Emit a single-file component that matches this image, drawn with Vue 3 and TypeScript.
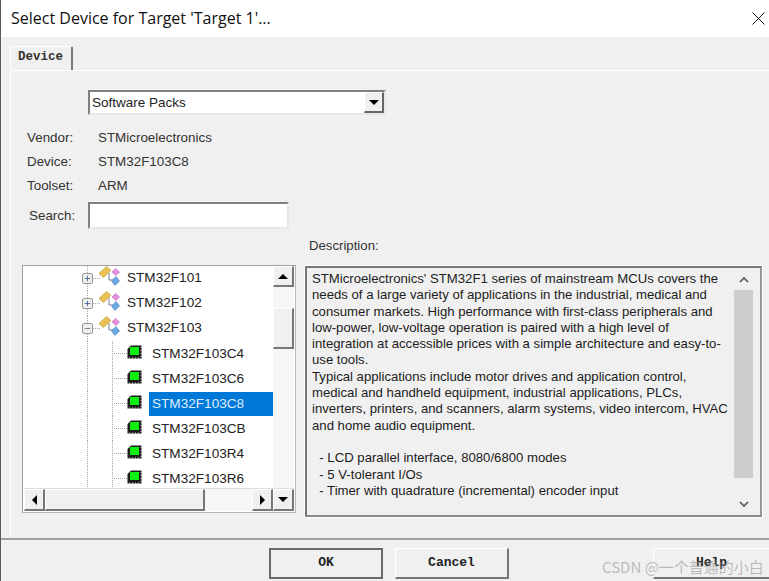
<script setup lang="ts">
interface TreeRow {
  label: string;
  kind: 'group' | 'chip';
  open?: boolean;
  selected?: boolean;
}

const rows: TreeRow[] = [
  { label: 'STM32F101', kind: 'group' },
  { label: 'STM32F102', kind: 'group' },
  { label: 'STM32F103', kind: 'group', open: true },
  { label: 'STM32F103C4', kind: 'chip' },
  { label: 'STM32F103C6', kind: 'chip' },
  { label: 'STM32F103C8', kind: 'chip', selected: true },
  { label: 'STM32F103CB', kind: 'chip' },
  { label: 'STM32F103R4', kind: 'chip' },
  { label: 'STM32F103R6', kind: 'chip' },
];

const infos = [
  { key: 'Vendor:', value: 'STMicroelectronics' },
  { key: 'Device:', value: 'STM32F103C8' },
  { key: 'Toolset:', value: 'ARM' },
];

const description: string[] = [
  "STMicroelectronics' STM32F1 series of mainstream MCUs covers the",
  'needs of a large variety of applications in the industrial, medical and',
  'consumer markets. High performance with first-class peripherals and',
  'low-power, low-voltage operation is paired with a high level of',
  'integration at accessible prices with a simple architecture and easy-to-',
  'use tools.',
  'Typical applications include motor drives and application control,',
  'medical and handheld equipment, industrial applications, PLCs,',
  'inverters, printers, and scanners, alarm systems, video intercom, HVAC',
  'and home audio equipment.',
  ' ',
  '  - LCD parallel interface, 8080/6800 modes',
  '  - 5 V-tolerant I/Os',
  '  - Timer with quadrature (incremental) encoder input',
];
</script>

<template>
  <div class="window">
    <header class="titlebar">
      <span class="title">Select Device for Target 'Target 1'...</span>
      <svg class="close" width="13" height="13" viewBox="0 0 13 13">
        <path d="M0.5 0.5 12.5 12.5 M12.5 0.5 0.5 12.5" stroke="#111" stroke-width="1" fill="none" />
      </svg>
    </header>

    <div class="tabs">
      <div class="tab">Device</div>
    </div>

    <main class="pane">
      <div class="combo">
        <span class="combo-text">Software Packs</span>
        <span class="combo-btn"><i class="tri down"></i></span>
      </div>

      <div class="infos">
        <div v-for="info in infos" :key="info.key" class="info">
          <span class="info-key">{{ info.key }}</span>
          <span class="info-val">{{ info.value }}</span>
        </div>
      </div>

      <div class="search">
        <span class="search-label">Search:</span>
        <div class="search-input"></div>
      </div>

      <div class="lower">
        <div class="tree">
          <div class="tree-main">
            <div class="tree-rows">
              <div v-for="row in rows" :key="row.label" class="row" :class="row.kind">
                <template v-if="row.kind === 'group'">
                  <span class="vline"></span>
                  <span class="hline-g"></span>
                  <span class="expander">
                    <svg width="9" height="9" viewBox="0 0 9 9">
                      <path v-if="row.open" d="M1 4.5H8" stroke="#5a6a8a" stroke-width="1" />
                      <path v-else d="M1 4.5H8M4.5 1V8" stroke="#34508a" stroke-width="1" />
                    </svg>
                  </span>
                  <svg class="group-icon" width="21" height="21" viewBox="0 0 21 21">
                    <path d="M10 7 V14 H14" stroke="#6f8199" stroke-width="1" fill="none" />
                    <path d="M0 7.5 7.5 0.5 12 4.5 4.5 11.5Z" fill="#eac254" stroke="#b08f2c" stroke-width="0.6" />
                    <path d="M13 6 16.5 2.5 20.5 6 17 9.5Z" fill="#e78fe0" stroke="#b567b0" stroke-width="0.6" />
                    <path d="M12.5 15 17 10.5 20.5 15 16 19.5Z" fill="#6aa8e6" stroke="#4a7fbc" stroke-width="0.6" />
                  </svg>
                  <span class="label">{{ row.label }}</span>
                </template>
                <template v-else>
                  <span class="vline"></span>
                  <span class="vline second"></span>
                  <span class="hline-c"></span>
                  <svg class="chip-icon" width="15" height="14" viewBox="0 0 15 14">
                    <path d="M4 0.5H14.5V13.5H0.5V4Z" fill="#1c1c1c" />
                    <path d="M2 13H13M14 2V12" stroke="#d8d8d8" stroke-width="1" stroke-dasharray="1 2" />
                    <rect x="3" y="2" width="9" height="8" fill="#10f010" />
                  </svg>
                  <span class="label" :class="{ selected: row.selected }">{{ row.label }}</span>
                </template>
              </div>
            </div>
            <div class="vscroll">
              <span class="sbtn"><i class="tri up"></i></span>
              <span class="track short"></span>
              <span class="vthumb"></span>
              <span class="track"></span>
            </div>
          </div>
          <div class="hscroll">
            <span class="sbtn"><i class="tri left"></i></span>
            <span class="hthumb"></span>
            <span class="track"></span>
            <span class="sbtn"><i class="tri right"></i></span>
            <span class="sbtn"><i class="tri down"></i></span>
          </div>
        </div>

        <div class="desc-col">
          <div class="desc-label">Description:</div>
          <div class="desc-box">
            <div class="desc-text">
              <div v-for="(line, i) in description" :key="i" class="desc-line">{{ line }}</div>
            </div>
            <div class="desc-scroll">
              <svg width="10" height="7" viewBox="0 0 10 7" class="chev"><path d="M1 6 5 2 9 6" stroke="#555" stroke-width="1.6" fill="none" /></svg>
              <span class="desc-thumb"></span>
              <svg width="10" height="7" viewBox="0 0 10 7" class="chev"><path d="M1 1 5 5 9 1" stroke="#555" stroke-width="1.6" fill="none" /></svg>
            </div>
          </div>
        </div>
      </div>
    </main>

    <footer class="footer">
      <button class="btn default">OK</button>
      <button class="btn">Cancel</button>
      <button class="btn help">Help</button>
    </footer>

    <span class="watermark">CSDN @一个普通的小白</span>
  </div>
</template>

<style>
html, body { margin: 0; padding: 0; background: #f0f0f0; }
</style>

<style scoped>
.window {
  position: relative;
  width: 769px;
  height: 581px;
  box-sizing: border-box;
  overflow: hidden;
  background: #f0f0f0;
  border-left: 1px solid #5a5a5a;
  font-family: "Liberation Sans", Arial, sans-serif;
  font-size: 14px;
  color: #222;
  display: flex;
  flex-direction: column;
}
.titlebar {
  height: 37px;
  flex: none;
  background: #fff;
  display: flex;
  align-items: center;
  justify-content: space-between;
  padding: 0 3px 2px 10px;
  box-sizing: border-box;
}
.title {
  font-family: "Open Sans", "Noto Sans", sans-serif;
  font-size: 16px;
  color: #111;
}
.close { margin-right: 1px; margin-top: 2px; }
.tabs {
  flex: none;
  height: 33px;
  box-sizing: border-box;
  padding: 9px 0 0 9px;
  display: flex;
}
.tab {
  width: 63px;
  height: 24px;
  box-sizing: border-box;
  background: #f0f0f0;
  border-top: 1px solid #fff;
  border-left: 1px solid #fff;
  border-right: 2px solid #777;
  border-radius: 2px 2px 0 0;
  font-family: "Liberation Mono", monospace;
  font-weight: 700;
  font-size: 12.5px;
  color: #333;
  padding: 3px 0 0 7px;
}
.pane {
  flex: 1;
  min-height: 0;
  box-sizing: border-box;
  margin-left: 9px;
  border-top: 1px solid #fff;
  border-left: 1px solid #fff;
  padding: 19px 0 0 0;
}
.combo {
  width: 298px;
  height: 25px;
  margin-left: 77px;
  box-sizing: border-box;
  background: #fff;
  border: 2px solid #808080;
  border-right-color: #e8e8e8;
  border-bottom-color: #e8e8e8;
  display: flex;
  align-items: center;
  justify-content: space-between;
}
.combo-text { padding-left: 2px; font-size: 13.5px; }
.combo-btn {
  width: 20px;
  height: 21px;
  box-sizing: border-box;
  background: #f0f0f0;
  border: 1px solid #fff;
  border-right: 2px solid #666;
  border-bottom: 2px solid #666;
  display: flex;
  align-items: center;
  justify-content: center;
}
.infos { margin-top: 10px; }
.info {
  display: flex;
  height: 24px;
  align-items: center;
  padding-left: 16px;
  font-size: 13.4px;
  color: #333;
}
.info-key { width: 71px; }
.search {
  display: flex;
  align-items: center;
  margin-top: 5px;
  height: 27px;
}
.search-label { width: 77px; padding-left: 18px; box-sizing: border-box; font-size: 13.4px; color: #333; }
.search-input {
  width: 201px;
  height: 27px;
  box-sizing: border-box;
  background: #fff;
  border: 2px solid #808080;
  border-right-color: #e8e8e8;
  border-bottom-color: #e8e8e8;
}
.lower {
  display: flex;
  padding-left: 11px;
}
.tree {
  margin-top: 36px;
  width: 274px;
  height: 248px;
  box-sizing: border-box;
  background: #fff;
  border: 1px solid #a0a0a0;
  border-right-color: #b8b8b8;
  border-bottom-color: #b8b8b8;
  padding: 0 1px 1px 1px;
  display: flex;
  flex-direction: column;
}
.tree-main { flex: 1; min-height: 0; display: flex; }
.tree-rows { flex: 1; overflow: hidden; padding-top: 0; }
.row {
  position: relative;
  height: 25px;
  display: flex;
  align-items: center;
}
.vline, .hline-g, .hline-c {
  position: absolute;
  border: 0 dotted #a8a8a8;
}
.vline { left: 63px; top: 0; bottom: 0; border-left-width: 1px; }
.vline.second { left: 88px; }
.hline-g { left: 68px; top: 12px; width: 8px; border-top-width: 1px; }
.hline-c { left: 88px; top: 12px; width: 15px; border-top-width: 1px; }
.expander {
  position: absolute;
  left: 58px;
  top: 7px;
  width: 11px;
  height: 11px;
  box-sizing: border-box;
  background: #eee;
  border: 1px solid #999;
  border-radius: 2px;
  display: flex;
  align-items: center;
  justify-content: center;
}
.expander svg { flex: none; width: 7px; height: 7px; }
.group-icon { position: absolute; left: 75px; top: 0; }
.chip-icon { position: absolute; left: 103px; top: 4px; }
.group .label { position: absolute; left: 103px; top: 4px; }
.chip .label {
  position: absolute;
  left: 125px;
  right: 0;
  top: 1px;
  height: 24px;
  line-height: 24px;
  padding-left: 3px;
}
.label { font-size: 13.6px; color: #222; white-space: nowrap; }
.label.selected { background: #0078d7; color: #dfeeff; }
.vscroll {
  flex: none;
  width: 21px;
  display: flex;
  flex-direction: column;
}
.sbtn {
  flex: none;
  width: 21px;
  height: 21px;
  box-sizing: border-box;
  background: #f0f0f0;
  border: 1px solid #fff;
  border-right: 2px solid #777;
  border-bottom: 2px solid #777;
  display: flex;
  align-items: center;
  justify-content: center;
}
.track {
  flex: 1;
  background: repeating-conic-gradient(#f0f0f0 0 25%, #fdfdfd 0 50%) 0 0 / 2px 2px;
}
.track.short { flex: none; height: 21px; }
.vthumb {
  flex: none;
  height: 41px;
  box-sizing: border-box;
  background: #f0f0f0;
  border: 1px solid #fff;
  border-right: 2px solid #777;
  border-bottom: 2px solid #777;
}
.hscroll {
  flex: none;
  height: 23px;
  display: flex;
  background: #f0f0f0;
  border-top: 1px solid #ddd;
  box-sizing: border-box;
}
.hthumb {
  flex: none;
  width: 160px;
  box-sizing: border-box;
  background: #f0f0f0;
  border: 1px solid #fff;
  border-right: 2px solid #777;
  border-bottom: 2px solid #777;
}
.hscroll .sbtn { height: 22px; }
.tri { width: 0; height: 0; display: block; border: 5px solid transparent; }
.tri.down { border-top-color: #000; border-bottom-width: 0; }
.tri.up { border-bottom-color: #000; border-top-width: 0; }
.tri.left { border-right-color: #000; border-left-width: 0; }
.tri.right { border-left-color: #000; border-right-width: 0; }
.desc-col { margin-left: 9px; display: flex; flex-direction: column; }
.desc-label { height: 20px; line-height: 20px; padding-left: 4px; font-size: 13.2px; color: #333; margin-top: 7px; margin-bottom: 10px; }
.desc-box {
  width: 457px;
  height: 251px;
  box-sizing: border-box;
  border: 2px solid #777;
  border-right-color: #999;
  border-bottom-color: #888;
  outline: 1px solid #fff;
  display: flex;
  padding: 3px 7px 0 5px;
}
.desc-text { flex: 1; min-width: 0; }
.desc-line {
  height: 16.3px;
  line-height: 16.3px;
  white-space: pre;
  font-size: 13.17px;
  color: #1c1c1c;
}
.desc-scroll {
  flex: none;
  width: 19px;
  margin-top: -3px;
  display: flex;
  flex-direction: column;
  align-items: center;
}
.chev { flex: none; margin: 8px 0 7px; }
.desc-thumb { flex: 1; width: 19px; background: #cdcdcd; margin: 0 0 15px; }
.footer {
  flex: none;
  height: 43px;
  box-sizing: border-box;
  border-top: 2px solid #a0a0a0;
  display: flex;
  padding: 8px 0 0 268px;
  gap: 12px;
}
.btn {
  width: 114px;
  height: 31px;
  box-sizing: border-box;
  background: #f0f0f0;
  border: 1px solid #fff;
  border-right: 2px solid #777;
  border-bottom: 2px solid #777;
  font-family: "Liberation Mono", monospace;
  font-weight: 700;
  font-size: 13px;
  color: #222;
  padding: 0 0 2px;
}
.btn.default { border: 2px solid #6a6a6a; }
.btn.help { margin-left: 132px; width: 116px; flex: none; border-right: none; }
.watermark {
  position: absolute;
  left: 601px;
  top: 556px;
  font-family: "Noto Sans CJK SC", "Noto Sans", sans-serif;
  font-size: 15px;
  color: rgba(150, 150, 150, 0.6);
  white-space: nowrap;
}
</style>
